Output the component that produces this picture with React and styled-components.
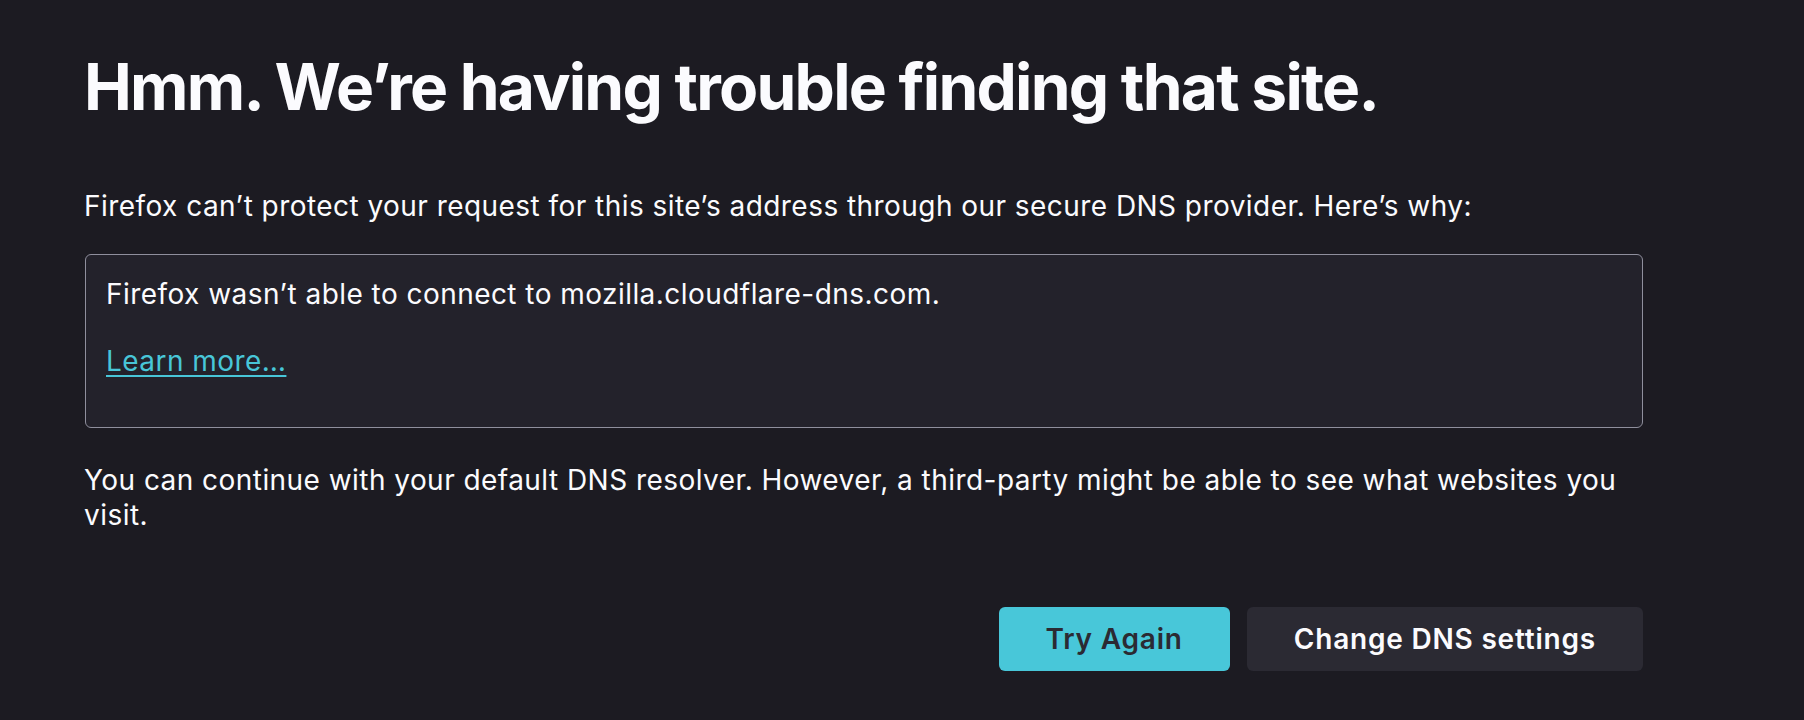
import React from "react";
import styled, { createGlobalStyle } from "styled-components";

const GlobalStyle = createGlobalStyle`
  html, body {
    margin: 0;
    padding: 0;
    background: #1c1b22;
  }
  body {
    font-family: Inter, "Noto Sans", sans-serif;
    color: #fbfbfe;
    -webkit-font-smoothing: antialiased;
  }
`;

const Page = styled.main`
  min-height: 720px;
  box-sizing: border-box;
  padding: 48px 0 0 84px;
`;

const Container = styled.div`
  width: 1559px;
`;

const Title = styled.h1`
  margin: 0 0 64px;
  font-size: 64px;
  line-height: 77px;
  font-weight: 700;
  letter-spacing: -1.75px;
`;

const Text = styled.p`
  margin: ${(p) => p.$margin || "0"};
  font-size: 28px;
  line-height: 35px;
  letter-spacing: 0.45px;
`;

const DetailBox = styled.div`
  box-sizing: border-box;
  margin: 30px 0 0 1px;
  padding: 22px 20px 48px;
  background: #23222b;
  border: 1.5px solid #8f8f9d;
  border-radius: 6px;
`;

const Link = styled.a`
  color: #48c6d8;
  text-decoration: underline;
  text-underline-offset: 4px;
  text-decoration-thickness: 2px;
`;

const ButtonRow = styled.div`
  display: flex;
  justify-content: flex-end;
  gap: 17px;
  margin-top: 74px;
`;

const Button = styled.button`
  height: 64px;
  padding: 0 47px;
  border: none;
  border-radius: 6px;
  font-family: Inter, "Noto Sans", sans-serif;
  font-size: 28px;
  font-weight: 600;
  letter-spacing: 0.8px;
  cursor: pointer;
  background: ${(p) => (p.$primary ? "#48c7d9" : "#2b2a33")};
  color: ${(p) => (p.$primary ? "#2b2a33" : "#fbfbfe")};
`;

const App = () => {
  return (
    <>
      <GlobalStyle />
      <Page>
        <Container>
          <Title>Hmm. We’re having trouble finding that site.</Title>
          <Text>
            Firefox can’t protect your request for this site’s address through our secure DNS provider. Here’s why:
          </Text>
          <DetailBox>
            <Text>Firefox wasn’t able to connect to mozilla.cloudflare-dns.com.</Text>
            <Text $margin="32px 0 0">
              <Link href="#">Learn more…</Link>
            </Text>
          </DetailBox>
          <Text $margin="35px 0 0">
            You can continue with your default DNS resolver. However, a third-party might be able to see what websites you visit.
          </Text>
          <ButtonRow>
            <Button $primary>Try Again</Button>
            <Button>Change DNS settings</Button>
          </ButtonRow>
        </Container>
      </Page>
    </>
  );
};

export default App;
